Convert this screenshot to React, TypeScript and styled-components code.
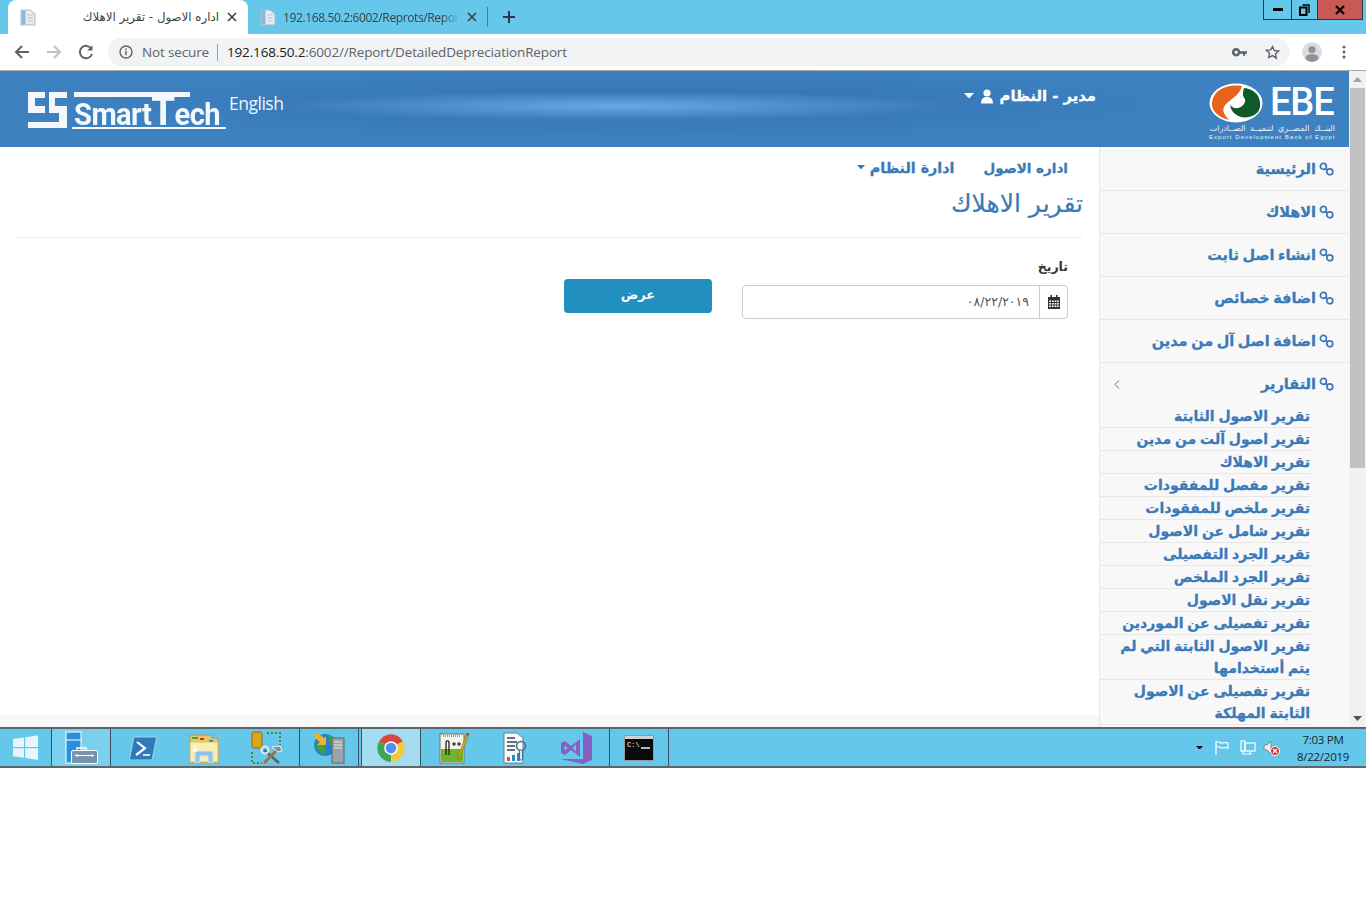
import React from "react";
import styled, { createGlobalStyle } from "styled-components";

const AR = `"DejaVu Sans", "Noto Sans", sans-serif`;
const UI = `"Open Sans", "Noto Sans", sans-serif`;

const Global = createGlobalStyle`
  html, body { margin: 0; padding: 0; background: #fff; }
  body { font-family: ${UI}; overflow: hidden; }
  #root { width: 1366px; height: 897px; }
  * { box-sizing: border-box; }
  ul { list-style: none; margin: 0; padding: 0; }
`;

const Screen = styled.div`
  width: 1366px;
  height: 897px;
  display: flex;
  flex-direction: column;
  background: #fff;
`;

/* ---------- browser chrome ---------- */
const TabStrip = styled.div`
  height: 34px;
  background: #65c8ea;
  display: flex;
  align-items: flex-end;
  padding-left: 8px;
`;
const Tab = styled.div<{ $active?: boolean }>`
  width: 240px;
  height: 34px;
  display: flex;
  align-items: center;
  gap: 7px;
  padding: 0 11px 0 12px;
  background: ${(p) => (p.$active ? "#fff" : "transparent")};
  border-radius: 8px 8px 0 0;
  color: #3c4043;
  font: 12px ${UI};
`;
const TabTitle = styled.span<{ $fade?: boolean }>`
  flex: 1;
  min-width: 0;
  white-space: nowrap;
  overflow: hidden;
  ${(p) =>
    p.$fade
      ? `letter-spacing: -0.38px; -webkit-mask-image: linear-gradient(90deg,#000 90%,transparent); mask-image: linear-gradient(90deg,#000 90%,transparent);`
      : `direction: rtl; font-family: ${AR}; font-size: 11.8px; padding-right: 1px;`}
`;
const TabSep = styled.div`
  width: 1px;
  height: 20px;
  margin: 0 0 7px -1px;
  background: #3f7f97;
`;
const NewTab = styled.div`
  width: 42px;
  height: 34px;
  display: flex;
  align-items: center;
  justify-content: center;
`;
const WinButtons = styled.div`
  margin-left: auto;
  align-self: flex-start;
  display: flex;
  height: 20px;
  margin-right: 3px;
  border: 1px solid #2c3a40;
  border-top: 0;
`;
const WinBtn = styled.div<{ $w: number; $close?: boolean }>`
  width: ${(p) => p.$w}px;
  height: 100%;
  display: flex;
  align-items: center;
  justify-content: center;
  background: ${(p) => (p.$close ? "#c75b54" : "transparent")};
  border-left: 1px solid #2c3a40;
  &:first-child { border-left: 0; }
`;
const NavBar = styled.div`
  height: 37px;
  background: #fff;
  border-bottom: 1px solid #a9abad;
  display: flex;
  align-items: center;
  padding-left: 6px;
`;
const NavIcon = styled.div`
  width: 32px;
  height: 32px;
  display: flex;
  align-items: center;
  justify-content: center;
`;
const MenuDots = styled(NavIcon)`
  margin-left: 6px;
`;
const Omnibox = styled.div`
  width: 1182px;
  height: 28px;
  margin-left: 6px;
  background: #f1f3f4;
  border-radius: 14px;
  display: flex;
  align-items: center;
  padding: 0 2px 0 11px;
  font: 13.5px ${UI};
  color: #5f6368;
  letter-spacing: -0.15px;
`;
const NotSecure = styled.span`
  margin-left: 9px;
  padding-right: 8px;
  border-right: 1px solid #9aa0a6;
  line-height: 17px;
`;
const Url = styled.span`
  margin-left: 9px;
  flex: 1;
  white-space: nowrap;
  b { font-weight: 400; color: #202124; }
`;
const OmniIcon = styled.div`
  width: 32px;
  display: flex;
  align-items: center;
  justify-content: center;
  height: 28px;
`;
const Avatar = styled.div`
  width: 20px;
  height: 20px;
  margin-left: 12px;
  border-radius: 50%;
  background: #dadce0;
  overflow: hidden;
`;

/* ---------- page viewport ---------- */
const Viewport = styled.div`
  height: 656px;
  display: flex;
`;
const Page = styled.div`
  width: 1349px;
  display: flex;
  flex-direction: column;
  direction: rtl;
`;
const Header = styled.header`
  height: 76px;
  direction: ltr;
  display: flex;
  align-items: flex-start;
  background:
    radial-gradient(ellipse 340px 15px at 620px 35px, rgba(112, 178, 238, 0.85), rgba(112, 178, 238, 0) 100%),
    radial-gradient(ellipse 560px 38px at 640px 33px, rgba(48, 108, 172, 0.75), rgba(48, 108, 172, 0) 100%),
    #3d81c0;
`;
const BrandLeft = styled.div`
  display: flex;
  align-items: flex-start;
  padding: 21px 0 0 28px;
`;
const Wordmark = styled.div`
  margin-left: 4px;
  width: 154px;
  display: flex;
  flex-direction: column;
`;
const WordTop = styled.div`
  height: 5px;
  width: 116px;
  margin-left: 2px;
  background: #f4f8fc;
`;
const WordText = styled.div`
  margin-left: 2px;
  height: 30px;
  color: #f4f8fc;
  font: 700 31px/36px "Roboto", sans-serif;
  letter-spacing: -0.6px;
  white-space: nowrap;
  transform: scaleX(0.94);
  transform-origin: left;
`;
const WordT = styled.span`
  font-size: 41px;
  line-height: 0;
`;
const WordLine = styled.div`
  height: 2px;
  background: #f4f8fc;
`;
const English = styled.a`
  margin: -2px 0 0 3px;
  color: #eef5fb;
  font: 17.5px/26px ${UI};
  letter-spacing: -0.5px;
`;
const UserMenu = styled.div`
  margin-left: auto;
  margin-top: 15px;
  display: flex;
  align-items: center;
  gap: 6px;
  color: #fff;
  font: 700 14.8px/20px ${AR};
  -webkit-text-stroke: 0.3px #fff;
  direction: ltr;
`;
const BrandRight = styled.div`
  width: 126px;
  margin: 11px 14px 0 113px;
  display: flex;
  flex-direction: column;
  align-items: stretch;
  color: #eaf2f9;
`;
const EbeTop = styled.div`
  display: flex;
  align-items: center;
  gap: 7px;
  height: 41px;
`;
const EbeWord = styled.span`
  font: 500 38px/41px "Roboto", sans-serif;
  letter-spacing: -1.1px;
  color: #fff;
`;
const EbeAr = styled.div`
  direction: rtl;
  font: 8px/10px ${AR};
  word-spacing: 2px;
  white-space: nowrap;
  margin-top: 1px;
`;
const EbeEn = styled.div`
  font: 6px/7px "Liberation Sans", sans-serif;
  letter-spacing: 1.04px;
  white-space: nowrap;
`;
const Body = styled.div`
  flex: 1;
  min-height: 0;
  display: flex;
`;
const Sidebar = styled.aside`
  width: 250px;
  background: #f8f8f8;
  border-left: 1px solid #e7e7e7;
  padding-top: 1px;
  overflow: hidden;
  font-family: ${AR};
`;
const MenuItem = styled.li`
  height: 43px;
  border-bottom: 1px solid #e7e7e7;
  display: flex;
  align-items: center;
  gap: 3px;
  padding-right: 15px;
  color: #3a7ab8;
  font: 700 14.5px/22px ${AR};
  word-spacing: -1.5px;
  -webkit-text-stroke: 0.3px #3a7ab8;
`;
const OpenItem = styled(MenuItem)`
  height: 42px;
  border-bottom: 0;
  padding-left: 14px;
`;
const Chevron = styled.span`
  margin-right: auto;
  display: flex;
`;
const SubItem = styled.li`
  margin-right: 39px;
  border-bottom: 1px solid #e7e7e7;
  color: #3a7ab8;
  font: 700 14px/22px ${AR};
  word-spacing: -1px;
  padding-left: 8px;
  -webkit-text-stroke: 0.3px #3a7ab8;
`;
const Main = styled.main`
  flex: 1;
  min-width: 0;
  display: flex;
  flex-direction: column;
  background: #fff;
  color: #333;
`;
const Content = styled.div`
  flex: 1;
  padding: 0 16px 0 15px;
`;
const Crumbs = styled.nav`
  height: 41px;
  display: flex;
  align-items: center;
  gap: 29px;
  padding-right: 15px;
  color: #3a7ab8;
  font: 700 13.5px/20px ${AR};
  -webkit-text-stroke: 0.3px #3a7ab8;
`;
const CrumbDrop = styled.span`
  display: flex;
  align-items: center;
  gap: 5px;
  font-size: 14.3px;
`;
const Title = styled.h1`
  margin: 0;
  height: 50px;
  padding-top: 1px;
  border-bottom: 1px solid #eee;
  color: #3a7ab8;
  font: 400 25px/30px ${AR};
  -webkit-text-stroke: 0.2px #3a7ab8;
`;
const FormRow = styled.div`
  display: flex;
  margin-top: 20px;
  padding-right: 15px;
  gap: 30px;
`;
const Field = styled.div`
  width: 326px;
`;
const Label = styled.label`
  display: block;
  height: 27px;
  color: #333;
  font: 700 12.5px/18px ${AR};
`;
const InputGroup = styled.div`
  height: 34px;
  display: flex;
  border: 1px solid #ccc;
  border-radius: 4px;
`;
const Addon = styled.span`
  width: 28px;
  display: flex;
  align-items: center;
  justify-content: center;
  border-left: 1px solid #ccc;
`;
const DateValue = styled.span`
  flex: 1;
  padding: 0 10px;
  color: #555;
  font: 12.5px/32px ${AR};
`;
const Submit = styled.button`
  width: 148px;
  height: 34px;
  margin-top: 21px;
  border: 0;
  border-radius: 4px;
  background: #2190c0;
  color: #fff;
  font: 700 13px/30px ${AR};
  padding: 0 0 3px;
`;
const Footer = styled.div`
  height: 12px;
  background: #f8f8f8;
`;
const Scrollbar = styled.div`
  width: 17px;
  background: #f1f1f1;
  display: flex;
  flex-direction: column;
  align-items: center;
`;
const ScrollArrow = styled.div`
  height: 17px;
  width: 17px;
  display: flex;
  align-items: center;
  justify-content: center;
`;
const ScrollThumb = styled.div`
  width: 15px;
  height: 380px;
  margin-bottom: auto;
  background: #c1c1c1;
`;

/* ---------- taskbar ---------- */
const Taskbar = styled.footer`
  height: 41px;
  display: flex;
  background: #65c8ea;
  border-top: 2px solid #5a686e;
  border-bottom: 2px solid #5a686e;
`;
const TaskGroup = styled.div<{ $w: number; $tone?: "lit" | "hot" }>`
  width: ${(p) => p.$w}px;
  display: flex;
  align-items: center;
  justify-content: space-around;
  padding-left: ${(p) => (p.$w > 100 ? 2 : 0)}px;
  border-right: 1px solid #37525c;
  background: ${(p) => (p.$tone === "hot" ? "#a4dcf1" : p.$tone === "lit" ? "#7bd0ee" : "transparent")};
`;
const Gap = styled.div`
  width: 3px;
  border-right: 1px solid #37525c;
`;
const Tray = styled.div`
  margin-left: auto;
  display: flex;
  align-items: center;
  padding-right: 12px;
  color: #16252b;
`;
const TrayIcon = styled.div<{ $w: number }>`
  width: ${(p) => p.$w}px;
  display: flex;
  justify-content: center;
`;
const Clock = styled.div`
  width: 62px;
  margin-left: 6px;
  text-align: center;
  font: 11.5px/17px ${UI};
  letter-spacing: -0.25px;
`;

/* ---------- icons ---------- */
const LinkIcon = () => (
  <svg width="15" height="15" viewBox="0 0 15 15" fill="none" stroke="#3a7ab8" strokeWidth="1.7">
    <circle cx="4.4" cy="4.4" r="3" />
    <circle cx="10.8" cy="9.8" r="3" />
    <path d="M6.6 6.4l2 1.6" />
  </svg>
);
const Caret = ({ c = "#fff", w = 9 }: { c?: string; w?: number }) => (
  <svg width={w} height={w * 0.55} viewBox="0 0 10 5.5">
    <path d="M0 0h10L5 5.5z" fill={c} />
  </svg>
);
const FavDoc = () => (
  <svg width="16" height="17" viewBox="0 0 16 17">
    <path d="M1 1h9l5 4v11H1z" fill="#e8eef3" stroke="#aab8c4" />
    <rect x="1.5" y="1.5" width="4" height="14" fill="#8fb6d8" />
    <path d="M7 6h6M7 9h6M7 12h6" stroke="#b8c4ce" />
  </svg>
);
const CloseX = ({ c = "#3c4043" }: { c?: string }) => (
  <svg width="10" height="10" viewBox="0 0 10 10" stroke={c} strokeWidth="1.6">
    <path d="M1 1l8 8M9 1l-8 8" />
  </svg>
);
const WinLogo = () => (
  <svg width="27" height="27" viewBox="0 0 27 27" fill="#e6f6fc">
    <path d="M1 5l11-1.6V13H1zM13.2 3.2L26 1.2V13H13.2zM1 14.2h11v9.6L1 22.2zM13.2 14.2H26V26l-12.8-2z" />
  </svg>
);
const ServerMgr = () => (
  <svg width="33" height="33" viewBox="0 0 33 33">
    <rect x="1" y="1" width="15" height="31" fill="#2b90dc" stroke="#fff" />
    <path d="M1 9h15" stroke="#fff" />
    <path d="M12 20v-3h9v3" fill="none" stroke="#fff" strokeWidth="1.4" />
    <rect x="6.5" y="19.5" width="26" height="13" rx="1.5" fill="#7a93a6" stroke="#fff" />
    <path d="M10 24.5h19" stroke="#fff" />
    <rect x="11" y="23.5" width="2" height="2" fill="#fff" />
    <rect x="26" y="23.5" width="2" height="2" fill="#fff" />
  </svg>
);
const PowerShell = () => (
  <svg width="28" height="24" viewBox="0 0 28 24">
    <path d="M6 1h20c1 0 1.600.7 1.400 1.700l-4 19.600c-.2 1-1 1.700-2 1.700H2c-1 0-1.600-.7-1.400-1.700l4-19.600C4.800 1.700 5 1 6 1z" fill="#2f79b8" stroke="#a6d5ee" />
    <path d="M8 6l8 6.200L7 19" fill="none" stroke="#fff" strokeWidth="2.200" />
    <path d="M14 19h7" stroke="#cfe6f4" strokeWidth="2" />
  </svg>
);
const Explorer = () => (
  <svg width="32" height="30" viewBox="0 0 32 30">
    <path d="M2 2h20l2 3h6v24H2z" fill="#e7c766" stroke="#b9975a" />
    <path d="M4 4h6v2H4z" fill="#3aa64a" />
    <path d="M12 5h4v2h-4z" fill="#c33" />
    <path d="M21 7h4v2h-4z" fill="#2a78d6" />
    <path d="M2 9h28v20H2z" fill="#fbeeae" stroke="#d8bd6e" />
    <path d="M9 18h14c1 0 2 1 2 2v9h-5v-6h-8v6H7v-9c0-1 1-2 2-2z" fill="#8fc4e6" stroke="#cfe8f5" />
    <path d="M6 13l4 5-5 1z" fill="#fff" opacity="0.85" />
  </svg>
);
const Tools = () => (
  <svg width="32" height="33" viewBox="0 0 32 33">
    <rect x="1" y="1" width="10" height="16" rx="2" fill="#e0a416" stroke="#8b6a1a" />
    <path d="M16 2h13v12M1 21v11h10" fill="none" stroke="#3f8f3f" strokeWidth="2" strokeDasharray="2 2" />
    <path d="M13 19l15 13" stroke="#59646b" strokeWidth="2.600" />
    <path d="M27 18L13 32" stroke="#a66f38" strokeWidth="2.600" />
    <path d="M21 16l8-1 2 5-4 1z" fill="#808b92" stroke="#f2f2f2" />
    <circle cx="14" cy="19" r="3.500" fill="none" stroke="#e4e8ea" strokeWidth="2" />
  </svg>
);
const GlobeServer = () => (
  <svg width="32" height="32" viewBox="0 0 32 32">
    <circle cx="12" cy="13" r="11" fill="#2a7fcc" />
    <path d="M5 10l6 2 2 6-3 6-3-5-4-3zM15 3l6 2 1 7-5 1z" fill="#41a13c" />
    <path d="M1 1l5 1 5 4 2-2v9H4l3-3-5-4z" fill="#f0b429" />
    <rect x="19" y="6" width="12" height="25" fill="#9aa3a8" stroke="#5f676c" />
    <path d="M21 10h8M21 13h8M21 16h8" stroke="#e6eaec" />
  </svg>
);
const ChromeIcon = () => (
  <svg width="30" height="30" viewBox="0 0 48 48">
    <path d="M24 24L5 13A22 22 0 0 1 43 13z" fill="#d9483b" />
    <path d="M24 24L43 13A22 22 0 0 1 24 46z" fill="#f6c83b" />
    <path d="M24 24L24 46A22 22 0 0 1 5 13z" fill="#3fa455" />
    <circle cx="24" cy="24" r="11" fill="#fff" />
    <circle cx="24" cy="24" r="8.600" fill="#4f8fef" />
  </svg>
);
const NotepadPP = () => (
  <svg width="32" height="32" viewBox="0 0 32 32">
    <rect x="1" y="2" width="24" height="29" fill="#f4f4ea" stroke="#707070" />
    <path d="M2 17h22v13H2z" fill="#6cb62b" />
    <path d="M4 4h18" stroke="#9a9a9a" strokeWidth="2" strokeDasharray="1 1" />
    <path d="M7 23V11c0-3 3-3 3 0v12" fill="none" stroke="#111" strokeWidth="1.200" />
    <path d="M13 12h4M15 10v4M18 12h4M20 10v4" stroke="#111" />
    <path d="M30 2L21 25l-2 2 .5-4L28 1z" fill="#e8a824" stroke="#8b6518" strokeWidth=".6" />
    <path d="M28 1l2 1-.6 2-2-1z" fill="#a9342b" />
  </svg>
);
const ReportIcon = () => (
  <svg width="24" height="32" viewBox="0 0 24 32">
    <path d="M1 1h13l6 5v25H1z" fill="#f8fafb" stroke="#6f7f8b" />
    <path d="M4 6h8M4 10h10M4 14h8M4 18h8" stroke="#33434e" strokeWidth="1.600" />
    <rect x="4" y="25" width="3" height="4" fill="#d9502e" />
    <rect x="9" y="23" width="3" height="6" fill="#2a8ad6" />
    <rect x="14" y="21" width="3" height="8" fill="#2a8ad6" />
    <circle cx="18" cy="14" r="4.500" fill="none" stroke="#4b6b84" strokeWidth="1.600" />
    <rect x="16.500" y="18" width="3" height="10" rx="1" fill="#dfe7ec" stroke="#4b6b84" />
  </svg>
);
const VsIcon = () => (
  <svg width="34" height="34" viewBox="0 0 34 34" fill="#8661c5">
    <path d="M24 1l9 4v24l-9 4L1 28l23 0z" />
    <path fillRule="evenodd" d="M2 12l4-2 6 5 9-7v18l-9-7-6 5-4-2zM5.500 14.500v5L9 17zM17 13.500L13.500 17l3.500 3.500z" />
  </svg>
);
const CmdIcon = () => (
  <svg width="30" height="26" viewBox="0 0 30 26">
    <rect x=".5" y=".5" width="29" height="25" fill="#0a0a0a" stroke="#8f9ba1" />
    <rect x="1" y="1" width="28" height="3" fill="#c9d3d8" />
    <text x="3" y="12" fill="#fff" fontFamily="Liberation Mono" fontSize="7">C:\</text>
    <path d="M17 13h9" stroke="#fff" strokeWidth="1.400" />
  </svg>
);
const EbeMark = () => (
  <svg width="54" height="40" viewBox="0 0 54 40">
    <ellipse cx="27" cy="20" rx="26.500" ry="19.500" fill="#fff" />
    <path d="M33 3C19 1 5 6 3 19c-1 9 6 15 17 18C14 31 12 25 18 20c6-5 13-9 15-17z" fill="#e8641b" />
    <path d="M35 5c-2 7-1 8 1 11 2 5-8 14-15 6 1 8 9 14 19 12 9-2 12-8 11-15-1-8-7-13-16-14z" fill="#0f5a2a" />
  </svg>
);
const SmartMark = () => (
  <svg width="40" height="37" viewBox="0 0 40 37" fill="#f4f8fc">
    <path d="M0 0h17v6H7v8h10v7H0zM21 0h18v6H27v8h12v7H21zM31 21h8v15h-8zM0 30h39v6H0z" />
  </svg>
);
const CalendarIcon = () => (
  <svg width="12" height="14" viewBox="0 0 12 14">
    <path d="M0 2h12v12H0z" fill="#333" />
    <path d="M2.500 0h1.500v3H2.500zM8 0h1.500v3H8z" fill="#333" />
    <path d="M1.200 5.500h1.800v1.600H1.200zM3.900 5.500h1.800v1.600H3.900zM6.600 5.500h1.800v1.600H6.600zM9.100 5.500h1.700v1.600H9.100zM1.200 8h1.800v1.600H1.200zM3.900 8h1.800v1.600H3.900zM6.600 8h1.800v1.600H6.600zM9.100 8h1.700v1.600H9.100zM1.200 10.500h1.800v1.600H1.200zM3.900 10.500h1.800v1.600H3.900zM6.600 10.500h1.800v1.600H6.600zM9.100 10.500h1.700v1.600H9.100z" fill="#fff" />
  </svg>
);

const reports: string[] = [
  "تقرير الاصول الثابتة",
  "تقرير اصول آلت من مدين",
  "تقرير الاهلاك",
  "تقرير مفصل للمفقودات",
  "تقرير ملخص للمفقودات",
  "تقرير شامل عن الاصول",
  "تقرير الجرد التفصيلى",
  "تقرير الجرد الملخص",
  "تقرير نقل الاصول",
  "تقرير تفصيلى عن الموردين",
  "تقرير الاصول الثابتة التي لم يتم أستخدامها",
  "تقرير تفصيلى عن الاصول الثابتة المهلكة",
];
const menu = ["الرئيسية", "الاهلاك", "انشاء اصل ثابت", "اضافة خصائص", "اضافة اصل آل من مدين"];

export default function App() {
  return (
    <Screen>
      <Global />
      <TabStrip>
        <Tab $active>
          <FavDoc />
          <TabTitle>اداره الاصول - تقرير الاهلاك</TabTitle>
          <CloseX />
        </Tab>
        <Tab>
          <FavDoc />
          <TabTitle $fade>192.168.50.2:6002/Reprots/Repor</TabTitle>
          <CloseX />
        </Tab>
        <TabSep />
        <NewTab>
          <svg width="14" height="14" viewBox="0 0 14 14" stroke="#2f3a40" strokeWidth="2">
            <path d="M7 1v12M1 7h12" />
          </svg>
        </NewTab>
        <WinButtons>
          <WinBtn $w={27}>
            <svg width="10" height="3"><rect width="10" height="3" fill="#000" /></svg>
          </WinBtn>
          <WinBtn $w={26}>
            <svg width="11" height="12" viewBox="0 0 11 12" fill="none" stroke="#000" strokeWidth="1.400">
              <rect x="1" y="3.500" width="6.500" height="7.500" strokeWidth="2" />
              <path d="M3.500 1h6.500v8" />
            </svg>
          </WinBtn>
          <WinBtn $w={45} $close>
            <svg width="10" height="10" viewBox="0 0 10 10" stroke="#000" strokeWidth="2.200">
              <path d="M1 1l8 8M9 1l-8 8" />
            </svg>
          </WinBtn>
        </WinButtons>
      </TabStrip>
      <NavBar>
        <NavIcon>
          <svg width="16" height="16" viewBox="0 0 16 16" fill="none" stroke="#5f6368" strokeWidth="2">
            <path d="M15 8H2M8 2L2 8l6 6" />
          </svg>
        </NavIcon>
        <NavIcon>
          <svg width="16" height="16" viewBox="0 0 16 16" fill="none" stroke="#bdc1c6" strokeWidth="2">
            <path d="M1 8h13M8 2l6 6-6 6" />
          </svg>
        </NavIcon>
        <NavIcon>
          <svg width="16" height="16" viewBox="0 0 16 16" fill="none" stroke="#5f6368" strokeWidth="2">
            <path d="M13.500 5A6.200 6.200 0 1 0 14 10" />
            <path d="M14.500 1.200v5.300H9.200z" fill="#5f6368" stroke="none" />
          </svg>
        </NavIcon>
        <Omnibox>
          <svg width="14" height="14" viewBox="0 0 14 14" fill="none" stroke="#5f6368" strokeWidth="1.400">
            <circle cx="7" cy="7" r="6" />
            <path d="M7 6v4.200M7 3.600v1.600" />
          </svg>
          <NotSecure>Not secure</NotSecure>
          <Url>
            <b>192.168.50.2</b>:6002//Report/DetailedDepreciationReport
          </Url>
          <OmniIcon>
            <svg width="16" height="9" viewBox="0 0 16 9" fill="#5f6368">
              <path d="M4.200 0a4.200 4.200 0 1 0 3.900 5.800H11v2h2.200v-2H15V3.200H8.100A4.200 4.200 0 0 0 4.200 0zm0 2.600a1.700 1.700 0 1 1 0 3.400 1.700 1.700 0 0 1 0-3.400z" />
            </svg>
          </OmniIcon>
          <OmniIcon>
            <svg width="15" height="15" viewBox="0 0 24 24" fill="none" stroke="#5f6368" strokeWidth="2.200">
              <path d="M12 2.500l2.900 6.300 6.900.8-5.100 4.700 1.400 6.800L12 17l-6.100 3.100 1.400-6.800-5.100-4.700 6.900-.8z" />
            </svg>
          </OmniIcon>
        </Omnibox>
        <Avatar>
          <svg width="20" height="20" viewBox="0 0 20 20" fill="#8f9399">
            <circle cx="10" cy="7.500" r="3.600" />
            <ellipse cx="10" cy="16" rx="6.500" ry="4" />
          </svg>
        </Avatar>
        <MenuDots>
          <svg width="4" height="14" viewBox="0 0 4 14" fill="#5f6368">
            <circle cx="2" cy="2" r="1.500" />
            <circle cx="2" cy="7" r="1.500" />
            <circle cx="2" cy="12" r="1.500" />
          </svg>
        </MenuDots>
      </NavBar>

      <Viewport>
        <Page>
          <Header>
            <BrandLeft>
              <SmartMark />
              <Wordmark>
                <WordTop />
                <WordText>
                  Smart<WordT>T</WordT>ech
                </WordText>
                <WordLine />
              </Wordmark>
              <English>English</English>
            </BrandLeft>
            <UserMenu>
              <Caret w={10} />
              <svg width="14" height="15" viewBox="0 0 14 15" fill="#fff">
                <circle cx="7" cy="4" r="3.600" />
                <path d="M1 14.500c0-5 2.500-6.500 6-6.500s6 1.500 6 6.500z" />
              </svg>
              <span dir="rtl">مدير - النظام</span>
            </UserMenu>
            <BrandRight>
              <EbeTop>
                <EbeMark />
                <EbeWord>EBE</EbeWord>
              </EbeTop>
              <EbeAr>البنــك المصــري لتنميــة الصــادرات</EbeAr>
              <EbeEn>Export Development Bank of Egypt</EbeEn>
            </BrandRight>
          </Header>
          <Body>
            <Sidebar>
              <ul>
                {menu.map((m) => (
                  <MenuItem key={m}>
                    <LinkIcon />
                    <span>{m}</span>
                  </MenuItem>
                ))}
                <OpenItem>
                  <LinkIcon />
                  <span>التقارير</span>
                  <Chevron>
                    <svg width="6" height="9" viewBox="0 0 6 9" fill="none" stroke="#3a7ab8" strokeWidth="1">
                      <path d="M5 .5L1 4.500l4 4" />
                    </svg>
                  </Chevron>
                </OpenItem>
                {reports.map((r) => (
                  <SubItem key={r}>{r}</SubItem>
                ))}
              </ul>
            </Sidebar>
            <Main>
              <Content>
                <Crumbs>
                  <span>اداره الاصول</span>
                  <CrumbDrop>
                    ادارة النظام
                    <Caret c="#3a7ab8" w={8} />
                  </CrumbDrop>
                </Crumbs>
                <Title>تقرير الاهلاك</Title>
                <FormRow>
                  <Field>
                    <Label>تاريخ</Label>
                    <InputGroup>
                      <Addon>
                        <CalendarIcon />
                      </Addon>
                      <DateValue>٠٨/٢٢/٢٠١٩</DateValue>
                    </InputGroup>
                  </Field>
                  <Submit>عرض</Submit>
                </FormRow>
              </Content>
              <Footer />
            </Main>
          </Body>
        </Page>
        <Scrollbar>
          <ScrollArrow>
            <svg width="9" height="5"><path d="M0 5h9L4.500 0z" fill="#a3a3a3" /></svg>
          </ScrollArrow>
          <ScrollThumb />
          <ScrollArrow>
            <svg width="9" height="5"><path d="M0 0h9L4.500 5z" fill="#505050" /></svg>
          </ScrollArrow>
        </Scrollbar>
      </Viewport>

      <Taskbar>
        <TaskGroup $w={52}><WinLogo /></TaskGroup>
        <TaskGroup $w={59} $tone="lit"><ServerMgr /></TaskGroup>
        <TaskGroup $w={189}>
          <PowerShell />
          <Explorer />
          <Tools />
        </TaskGroup>
        <TaskGroup $w={59}><GlobeServer /></TaskGroup>
        <Gap />
        <TaskGroup $w={59} $tone="hot"><ChromeIcon /></TaskGroup>
        <TaskGroup $w={189}>
          <NotepadPP />
          <ReportIcon />
          <VsIcon />
        </TaskGroup>
        <TaskGroup $w={59}><CmdIcon /></TaskGroup>
        <Tray>
          <TrayIcon $w={12}><Caret c="#111" w={7} /></TrayIcon>
          <TrayIcon $w={34}>
            <svg width="16" height="15" viewBox="0 0 16 15" fill="none" stroke="#fff" strokeWidth="1.200">
              <path d="M2 1v14M2 2c3-1 4 1 6 1s4-1 6 0v5c-2-1-4 0-6 0s-3-2-6-1" fill="#65c8ea" />
            </svg>
          </TrayIcon>
          <TrayIcon $w={17}>
            <svg width="16" height="16" viewBox="0 0 16 16" fill="none" stroke="#fff" strokeWidth="1.200">
              <rect x="5" y="3" width="10" height="8" />
              <rect x="1" y="1" width="4" height="10" />
              <path d="M3 11v3h9M10 11v3" />
            </svg>
          </TrayIcon>
          <TrayIcon $w={30}>
            <svg width="17" height="16" viewBox="0 0 17 16">
              <path d="M1 5h3l4-4v13l-4-4H1z" fill="#e8eef2" stroke="#7a8a92" />
              <circle cx="12" cy="11" r="4.500" fill="#d9362b" stroke="#fff" />
              <path d="M10 9l4 4M14 9l-4 4" stroke="#fff" strokeWidth="1.300" />
            </svg>
          </TrayIcon>
          <Clock>
            <div>7:03 PM</div>
            <div>8/22/2019</div>
          </Clock>
        </Tray>
      </Taskbar>
    </Screen>
  );
}
